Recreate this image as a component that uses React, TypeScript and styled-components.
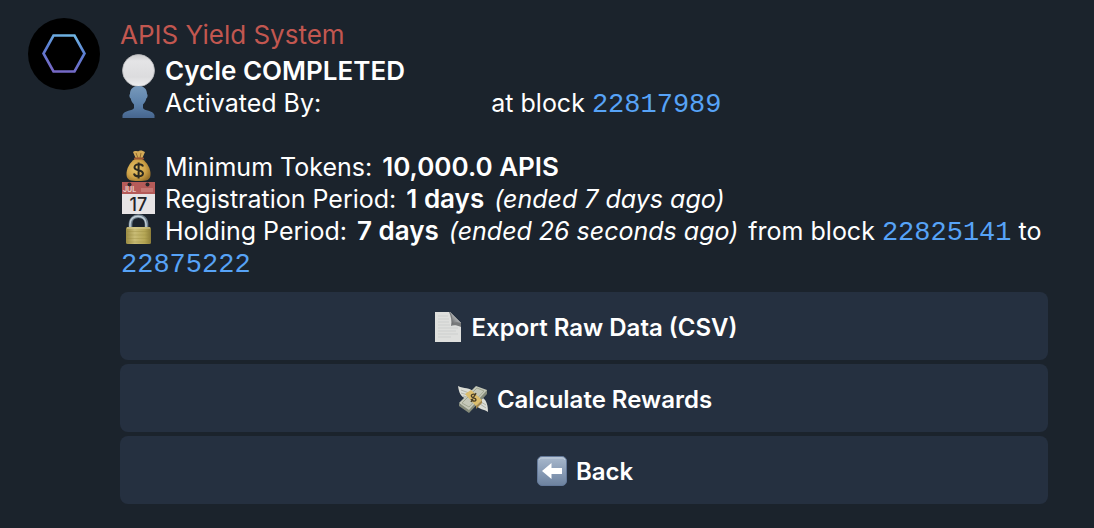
import React from "react";
import styled, { createGlobalStyle } from "styled-components";

const GlobalStyle = createGlobalStyle`
  * { box-sizing: border-box; }
  body {
    margin: 0;
    min-height: 100vh;
    background: #1b232c;
    color: #ffffff;
    font-family: Inter, "Liberation Sans", sans-serif;
    font-size: 25px;
    line-height: 32px;
  }
`;

const Message = styled.article`
  display: flex;
  align-items: flex-start;
  gap: 20px;
  padding: 18px 46px 24px 28px;
`;

const Avatar = styled.svg`
  flex: none;
  width: 72px;
  height: 72px;
`;

const Content = styled.div`
  flex: 1;
  min-width: 0;
`;

const Sender = styled.h1`
  margin: 0 0 4px;
  font-size: 26px;
  font-weight: 400;
  line-height: 33px;
  color: #c25750;
`;

const Body = styled.div`
  padding-left: 1px;
  margin-bottom: 13px;
`;

const Line = styled.p`
  margin: 0;
  min-height: 32px;
`;

const Strong = styled.strong`
  font-size: 26px;
  font-weight: 600;
  line-height: 1;
`;

const Value = styled(Strong)`
  margin: 0 3px;
`;

const Note = styled.em`
  margin-right: 3px;
`;

const Hidden = styled.span`
  display: inline-block;
  width: 156px;
`;

const BlockLink = styled.a`
  font-family: "Liberation Mono", monospace;
  font-size: 27px;
  line-height: 1;
  color: #57a3f7;
  text-decoration: none;
`;

const Emoji = styled.svg`
  width: 34px;
  height: 32px;
  margin-right: 10px;
  vertical-align: top;
  overflow: visible;
`;

const Keyboard = styled.div`
  display: grid;
  gap: 4px;
`;

const KeyButton = styled.button`
  display: flex;
  align-items: center;
  justify-content: center;
  height: 68px;
  padding: 4px 16px 0;
  border: 0;
  border-radius: 8px;
  background: #253040;
  color: #ffffff;
  font: inherit;
  font-size: 24px;
  font-weight: 600;
  cursor: pointer;

  ${Emoji} {
    margin-right: 7px;
  }
`;

const Logo = () => (
  <Avatar viewBox="0 0 72 72" role="img" aria-label="APIS">
    <defs>
      <linearGradient id="hex" x1="0.65" y1="0" x2="0.4" y2="1">
        <stop offset="0" stopColor="#6fb4e2" />
        <stop offset="0.4" stopColor="#5a7ed2" />
        <stop offset="1" stopColor="#7668c6" />
      </linearGradient>
    </defs>
    <circle cx="36" cy="36" r="36" fill="#000" />
    <path d="M25.5 17.5H46.5L56.5 35.5L46.5 53.5H25.5L15.5 35.5Z" fill="none" stroke="url(#hex)" strokeWidth="2.6" />
  </Avatar>
);

const WhiteCircle = () => (
  <Emoji viewBox="0 0 34 32" aria-hidden="true">
    <defs>
      <linearGradient id="ball" x1="0" y1="0" x2="0" y2="1">
        <stop offset="0" stopColor="#c9c9cb" />
        <stop offset="0.2" stopColor="#e4e4e6" />
        <stop offset="0.7" stopColor="#dcdcde" />
        <stop offset="1" stopColor="#efeff0" />
      </linearGradient>
    </defs>
    <circle cx="17.5" cy="15.5" r="16" fill="url(#ball)" stroke="#bcbcbf" strokeWidth="0.8" />
  </Emoji>
);

const Person = () => (
  <Emoji viewBox="0 0 34 32" aria-hidden="true">
    <defs>
      <linearGradient id="bust" x1="0" y1="0" x2="0" y2="1">
        <stop offset="0" stopColor="#7799bb" />
        <stop offset="0.55" stopColor="#5d82ab" />
        <stop offset="1" stopColor="#46658e" />
      </linearGradient>
    </defs>
    <path
      d="M17.5-1C23-1 26 2 26 7C27 7.500 26.800 10.500 25.300 11.500C24.700 14.300 23.500 16 22 17.500V21C23 24 32 23 33.500 28V31H1.500V28C3 23 12 24 13 21V17.500C11.500 16 10.300 14.300 9.700 11.500C8.200 10.500 8 7.500 9 7C9 2 12-1 17.500-1Z"
      fill="url(#bust)"
    />
  </Emoji>
);

const MoneyBag = () => (
  <Emoji viewBox="0 0 34 32" aria-hidden="true">
    <defs>
      <radialGradient id="bag" cx="0.4" cy="0.45" r="0.65">
        <stop offset="0" stopColor="#e8c66b" />
        <stop offset="0.6" stopColor="#cfa348" />
        <stop offset="1" stopColor="#97702a" />
      </radialGradient>
    </defs>
    <path d="M12 1C14-1 16 1 18 0C20-1 22 0 24 1L21 8H15Z" fill="#d3a957" />
    <path d="M15 2L17 7M20 2L19 7" stroke="#926b2d" />
    <path d="M14 8C9 11 5 18 5.500 24C6 29 9 30 17.500 30S29 29 29.500 24C30 18 26 11 21 8Z" fill="url(#bag)" />
    <path d="M14 7.500H22" stroke="#9b5533" strokeWidth="2.200" strokeLinecap="round" />
    <path
      d="M22 15.500C21 12.500 13.500 12.500 13.500 16.500C13.500 20 22 18.500 22 22.500C22 26.500 13.500 26 13 22.500M17.600 11.500V27.500"
      fill="none"
      stroke="#2b2920"
      strokeWidth="2"
    />
  </Emoji>
);

const CalendarIcon = () => (
  <Emoji viewBox="0 0 34 32" aria-hidden="true" fontFamily="Inter, sans-serif">
    <rect x="1" y="0" width="33" height="31" fill="#e7e4e5" />
    <rect x="1" y="-1" width="33" height="12" fill="#b55b59" />
    <circle cx="8.500" cy="1.500" r="2" fill="#29262b" />
    <circle cx="26.500" cy="1.500" r="2" fill="#29262b" />
    <path d="M20 7H32" stroke="#c57672" strokeWidth="4" />
    <text x="2" y="9" fontSize="7" fontWeight="700" fill="#e7c9c7">JUL</text>
    <text x="17.500" y="28" fontSize="18" fontWeight="500" textAnchor="middle" fill="#252429">17</text>
  </Emoji>
);

const Lock = () => (
  <Emoji viewBox="0 0 34 32" aria-hidden="true">
    <defs>
      <linearGradient id="brass" x1="0" y1="0" x2="1" y2="0">
        <stop offset="0" stopColor="#9b8c43" />
        <stop offset="0.35" stopColor="#c9bc76" />
        <stop offset="0.75" stopColor="#b5a655" />
        <stop offset="1" stopColor="#8c7d38" />
      </linearGradient>
    </defs>
    <path d="M9.500 14V9C9.500-1.500 25.500-1.500 25.500 9V14" fill="none" stroke="#71828f" strokeWidth="3.600" />
    <path d="M9 13V9C9-1.500 25-1.500 25 9V13" fill="none" stroke="#c0cdd5" strokeWidth="1.500" />
    <rect x="5" y="12" width="25" height="17" rx="1.500" fill="url(#brass)" />
    <path d="M6 13H29" stroke="#ddd29a" />
    <path d="M6 16.500H29M6 20H29M6 23.500H29M6 27H29" stroke="#99893f" strokeOpacity="0.350" />
  </Emoji>
);

const Page = () => (
  <Emoji viewBox="0 0 34 32" aria-hidden="true">
    <defs>
      <linearGradient id="fold" x1="0" y1="1" x2="1" y2="0">
        <stop offset="0" stopColor="#555759" />
        <stop offset="0.6" stopColor="#b8babb" />
        <stop offset="1" stopColor="#f5f5f5" />
      </linearGradient>
    </defs>
    <path d="M4 0H19L30 11V30H4Z" fill="#dedfdd" />
    <path d="M7 4H17M7 7H18M7 10H18M7 13H19M7 16H27M7 19H25M7 22H27M7 25H20" stroke="#cdcfce" />
    <path d="M18 0H19L30 11V15C26 13 22 13 20 14C21 9 20 4 18 0Z" fill="#77797a" />
    <path d="M19 0L30 11C27 10 24 10 21 12C22 7 21 3 19 0Z" fill="url(#fold)" />
  </Emoji>
);

const FlyingMoney = () => (
  <Emoji viewBox="0 0 34 32" aria-hidden="true">
    <path d="M2 2C3 8 4 13 11 15L18 8C14 3 8 5 2 2Z" fill="#dcddd6" />
    <path d="M5 6L13 9M5 9L12 11M7 12L12 13" stroke="#b0b3aa" />
    <path d="M32 28C32 22 31 17 27 14L20 21C23 26 28 25 32 28Z" fill="#dcddd6" />
    <path d="M30 24L24 20M30 21L25 18" stroke="#b0b3aa" />
    <path d="M3 19L20 2L31 6V9L13 28Z" fill="#c4c7b8" />
    <path d="M3 19L13 26V29L3 22ZM13 26L31 6V10L13 29Z" fill="#858b7a" />
    <path d="M6 19L21 4L28 7L13 23Z" fill="none" stroke="#a2a792" />
    <path d="M9 10L15 6L26 16L20 22Z" fill="#dcbd6c" />
    <path d="M20 22L26 16V19L20 25Z" fill="#a4874b" />
    <path d="M20 11C17 9 14 11 16 13C17 15 20 13 20 16C19 18 16 17 15 15M20 9L15 18" fill="none" stroke="#4b4028" strokeWidth="1.400" />
  </Emoji>
);

const BackArrow = () => (
  <Emoji viewBox="0 0 34 32" aria-hidden="true">
    <defs>
      <linearGradient id="key" x1="0" y1="0" x2="0" y2="1">
        <stop offset="0" stopColor="#a9b9cd" />
        <stop offset="0.5" stopColor="#8a9db7" />
        <stop offset="1" stopColor="#6d829f" />
      </linearGradient>
    </defs>
    <rect x="2.500" y="0.500" width="29" height="29" rx="4.500" fill="url(#key)" stroke="#64799a" />
    <path d="M4 4C5 2 6 2 8 2H26C28 2 29 2 30 4" fill="none" stroke="#c4cfdd" />
    <path d="M7 15L16.500 7V12H27V18H16.500V23Z" fill="#fff" />
  </Emoji>
);

const actions = [
  { label: "Export Raw Data (CSV)", Icon: Page },
  { label: "Calculate Rewards", Icon: FlyingMoney },
  { label: "Back", Icon: BackArrow },
];

export default function App() {
  return (
    <>
      <GlobalStyle />
      <Message>
        <Logo />
        <Content>
          <Sender>APIS Yield System</Sender>
          <Body>
            <Line><WhiteCircle /><Strong>Cycle COMPLETED</Strong></Line>
            <Line>
              <Person />Activated By: <Hidden /> at block <BlockLink href="#22817989">22817989</BlockLink>
            </Line>
            <Line />
            <Line><MoneyBag />Minimum Tokens: <Value>10,000.0 APIS</Value></Line>
            <Line>
              <CalendarIcon />Registration Period: <Value>1 days</Value> <Note>(ended 7 days ago)</Note>
            </Line>
            <Line>
              <Lock />Holding Period: <Value>7 days</Value> <Note>(ended 26 seconds ago)</Note> from block{" "}
              <BlockLink href="#22825141">22825141</BlockLink> to{" "}
              <BlockLink href="#22875222">22875222</BlockLink>
            </Line>
          </Body>
          <Keyboard>
            {actions.map(({ label, Icon }) => (
              <KeyButton key={label} type="button"><Icon />{label}</KeyButton>
            ))}
          </Keyboard>
        </Content>
      </Message>
    </>
  );
}
